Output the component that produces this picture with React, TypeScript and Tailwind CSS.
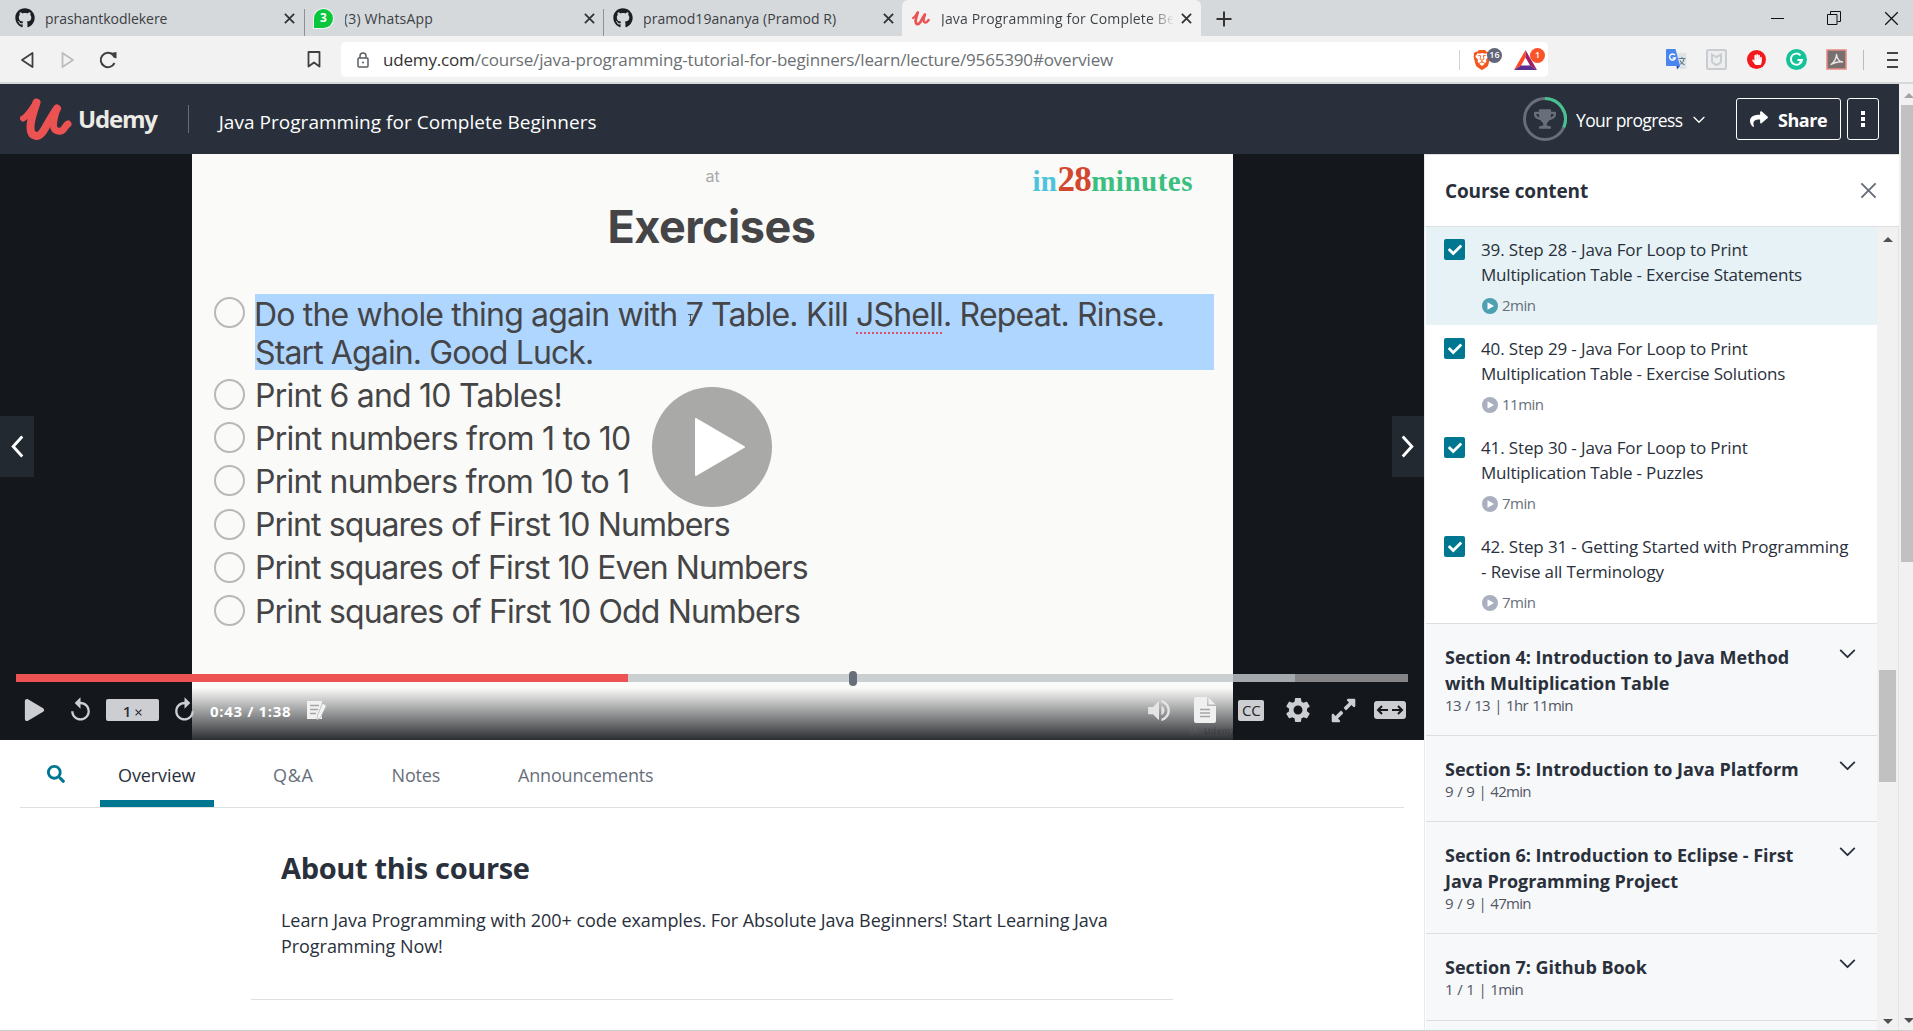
import type { ReactNode } from "react";
import { FaCheck, FaExpandAlt, FaGithub, FaHandPaper, FaPlay, FaSearch, FaShare, FaTrophy } from "react-icons/fa";
import { MdReplay, MdSettings, MdVolumeUp } from "react-icons/md";
import { SiBrave } from "react-icons/si";

/* ---------- shared drawings ---------- */

function UdemyMark({ className }: { className: string }) {
  return (
    <svg viewBox="0 0 52 43" className={className} fill="none" stroke="#ec5252" strokeLinecap="round" strokeLinejoin="round">
      <path d="M3 20.500C8 18 12 10 16.500 4.500" strokeWidth="6" />
      <path d="M16.500 4.500C14 13 10.500 21 10.500 29c0 11 8.500 11.500 13.500 3 4-7 8.500-15 13-21.500" strokeWidth="8" />
      <path d="M37 10.500C35 17 33 23 33.500 28c.500 6 8 7 11 2 1.500-2.500 2-3 3.500-4" strokeWidth="7" />
    </svg>
  );
}

function Chevron({ className }: { className: string }) {
  return (
    <svg viewBox="0 0 18 11" className={className} fill="none" stroke="currentColor" strokeWidth="2" strokeLinecap="round" strokeLinejoin="round">
      <path d="M1.500 1.500 9 9l7.500-7.500" />
    </svg>
  );
}

function Cross({ className }: { className: string }) {
  return (
    <svg viewBox="0 0 12 12" className={className} fill="none" stroke="currentColor">
      <path d="M1 1l10 10M11 1L1 11" />
    </svg>
  );
}

/* ---------- browser chrome ---------- */

function BrowserTab({ icon, label, active }: { icon: ReactNode; label: ReactNode; active?: boolean }) {
  return (
    <div className={"flex h-9 w-[299px] shrink-0 items-center pl-[10px] pr-[9px] " + (active ? "rounded-t-md bg-[#f2f2f2]" : "")}>
      <div className="flex w-[30px] shrink-0 items-center">{icon}</div>
      <div className="min-w-0 flex-1 overflow-hidden whitespace-nowrap pt-px text-[14px] leading-9 text-[#3c4043]">{label}</div>
      <Cross className="ml-2 h-[11px] w-[11px] stroke-2 text-[#333]" />
    </div>
  );
}

function TabStrip() {
  return (
    <div className="flex h-9 bg-[#d5d9dc]">
      <div className="flex pl-[5px]">
        <BrowserTab icon={<FaGithub className="h-5 w-5 text-[#1b1f23]" />} label={<span className="tracking-[-0.05px]">prashantkodlekere</span>} />
        <div className="mt-[9px] w-px bg-[#8e9193]" />
        <BrowserTab
          icon={
            <div className="-ml-px flex h-[19px] w-[19px] items-center justify-center rounded-full rounded-bl-sm bg-[#0ac63c] text-[12px] font-bold text-white ring-1 ring-white/70">3</div>
          }
          label={<span className="-ml-px tracking-[0.18px]">(3) WhatsApp</span>}
        />
        <div className="-ml-px mt-[9px] w-px bg-[#8e9193]" />
        <BrowserTab icon={<FaGithub className="-ml-px h-5 w-5 text-[#1b1f23]" />} label={<span className="-ml-px tracking-[0.06px]">pramod19ananya (Pramod R)</span>} />
        <div className="-ml-[1px]">
          <BrowserTab
            active
            icon={<UdemyMark className="h-[15px] w-[18px]" />}
            label={
              <span className="-ml-px bg-linear-to-r from-[#3c4043] from-[89%] to-[#3c4043]/0 bg-clip-text tracking-[0.16px] text-transparent">
                Java Programming for Complete Be
              </span>
            }
          />
        </div>
      </div>
      <div className="flex w-[46px] items-center justify-center pt-px">
        <svg viewBox="0 0 16 16" className="h-4 w-4 stroke-[#333] stroke-2">
          <path d="M8 0.500v15M0.500 8h15" />
        </svg>
      </div>
      <div className="ml-auto flex items-center pr-[14px] text-[#111]">
        <div className="h-px w-[13px] bg-[#111]" />
        <svg viewBox="0 0 14 14" className="ml-[43px] h-[14px] w-[14px]" fill="none" stroke="currentColor">
          <path d="M.500 3.500h9.500v10H.500zM3.500 3V.500h10v10H10.500" />
        </svg>
        <Cross className="ml-[43px] h-[15px] w-[15px] stroke-1" />
      </div>
    </div>
  );
}

function GoogleTranslate() {
  return (
    <svg viewBox="0 0 21 21" className="h-[21px] w-[21px]">
      <path d="M9 4h10.500a1 1 0 0 1 1 1v14a1 1 0 0 1-1 1H14z" fill="#dfe3e6" />
      <path d="M12.500 9.500h7M16 8v1.500M18.200 9.500c-.6 3-2.500 5-4.700 6M14 11.500c1 2 2.600 3.500 4.600 4.300" stroke="#607d8b" strokeWidth="1.100" fill="none" />
      <path d="M0 1a1 1 0 0 1 1-1h8.500L14 17H1a1 1 0 0 1-1-1z" fill="#4a86f0" />
      <path d="M10.500 17H14l-3 3.500z" fill="#2b4fb8" />
      <path d="M9 6.200A3 3 0 1 0 9.400 9H6.600" stroke="#fff" strokeWidth="1.400" fill="none" />
    </svg>
  );
}

function Toolbar() {
  return (
    <div className="flex h-[46px] items-center bg-[#f2f2f2] pt-px text-[#3f3f3f]">
      <svg viewBox="0 0 14 18" className="ml-[20px] h-[18px] w-[14px]" fill="none" stroke="#3f3f3f" strokeWidth="1.800" strokeLinejoin="round">
        <path d="M12.500 2v14L2 9z" />
      </svg>
      <svg viewBox="0 0 14 18" className="ml-[27px] h-[18px] w-[14px]" fill="none" stroke="#bdbdbd" strokeWidth="1.800" strokeLinejoin="round">
        <path d="M1.500 2v14L12 9z" />
      </svg>
      <svg viewBox="0 0 18 18" className="ml-[24px] h-[18px] w-[18px]" fill="none" stroke="#3f3f3f" strokeWidth="2">
        <path d="M15.500 12A7.200 7.200 0 1 1 14 3.800" />
        <path d="M11.500 2l6-1v6.500l-3-1z" fill="#3f3f3f" stroke="none" />
      </svg>
      <svg viewBox="0 0 14 17" className="ml-[190px] h-[17px] w-[14px]" fill="none" stroke="#3f3f3f" strokeWidth="1.800" strokeLinejoin="round">
        <path d="M1.500 1h11v14.500L7 11.500l-5.500 4z" />
      </svg>
      <div className="ml-[20px] flex h-[35px] w-[1207px] items-center rounded-[5px] bg-white">
        <svg viewBox="0 0 12 16" className="ml-[16px] h-[16px] w-[12px]" fill="none" stroke="#5b5f63" strokeWidth="1.500">
          <rect x="1" y="6" width="10" height="9" rx="1" />
          <path d="M3 6V4a3 3 0 0 1 6 0v2" />
          <circle cx="6" cy="10.500" r="1" fill="#5b5f63" stroke="none" />
        </svg>
        <div className="ml-[14px] whitespace-nowrap text-[17px] leading-[34px] tracking-[-0.17px] text-[#6c7073]">
          <span className="text-[#333]">udemy.com</span>/course/java-programming-tutorial-for-beginners/learn/lecture/9565390#overview
        </div>
        <div className="ml-auto h-5 w-px bg-[#d5d5d5]" />
        <div className="relative ml-[12px] w-[20px]">
          <SiBrave className="h-[22px] w-[20px] text-[#f2571f]" />
          <div className="absolute -top-[1px] left-[15px] flex h-[15px] w-[15px] items-center justify-center rounded-full bg-[#62657a] text-[9px] font-semibold text-white">16</div>
        </div>
        <div className="relative ml-[22px] mr-[11px] w-[23px]">
          <svg viewBox="0 0 23 20" className="h-[20px] w-[23px]">
            <path d="M11.500 0 0 20l7-4.500 4.500-8z" fill="#ff4724" />
            <path d="M11.500 0 23 20l-7-4.500-4.500-8z" fill="#9e1f63" />
            <path d="M0 20h23l-7-4.500H7z" fill="#5c2d91" />
          </svg>
          <div className="absolute -top-[2px] left-[16px] flex h-[15px] w-[15px] items-center justify-center rounded-full bg-[#fb542b] text-[9px] font-semibold text-white">1</div>
        </div>
      </div>
      <div className="ml-auto flex items-center pr-[15px]">
        <GoogleTranslate />
        <svg viewBox="0 0 21 21" className="ml-[19px] h-[21px] w-[21px]" fill="none" stroke="#c9cdd0" strokeWidth="2">
          <rect x="1" y="1" width="19" height="19" rx="1.500" fill="#eceeef" />
          <path d="M6 5.500l4.500 2.500L15 5.500v7c0 1.500-2.500 2.500-4.500 3.500C8.500 15 6 14 6 12.500z" />
        </svg>
        <div className="ml-[20px] flex h-[19px] w-[19px] items-center justify-center rounded-full bg-[#f5191d]">
          <FaHandPaper className="h-[11px] w-[12px] text-white" />
        </div>
        <svg viewBox="0 0 21 21" className="ml-[20px] h-[21px] w-[21px]" fill="none">
          <circle cx="10.500" cy="10.500" r="10.500" fill="#15c39a" />
          <path d="M14.500 6.300A5.600 5.600 0 1 0 16 11h-4.500" stroke="#fff" strokeWidth="1.900" />
          <path d="M13.500 14l2.500-3" stroke="#fff" strokeWidth="1.500" />
        </svg>
        <svg viewBox="0 0 21 21" className="ml-[19px] h-[21px] w-[21px]" fill="none">
          <rect x="1" y="1" width="19" height="19" fill="#77706f" stroke="#e88b82" strokeWidth="1.500" />
          <path d="M5 15.500c3-2 5.500-6.500 5.500-10 .500 4 3 7 6 7.500-4-.800-7 0-11.500 2.500z" stroke="#ece8e7" strokeWidth="1.400" strokeLinejoin="round" />
        </svg>
        <div className="ml-[16px] h-5 w-px bg-[#bcbcbc]" />
        <div className="ml-[23px] flex w-[11px] flex-col gap-[5px]">
          <div className="h-[2px] bg-[#444]" />
          <div className="h-[2px] bg-[#444]" />
          <div className="h-[2px] bg-[#444]" />
        </div>
      </div>
    </div>
  );
}

/* ---------- course header ---------- */

function CourseHeader() {
  return (
    <header className="flex h-[70px] w-full items-center bg-[#29303b] text-white">
      <UdemyMark className="ml-[20px] h-[43px] w-[52px]" />
      <div className="ml-[6px] text-[24px] font-bold leading-none tracking-[-1.2px] text-[#ecebe6]">Udemy</div>
      <div className="ml-[31px] h-7 w-px bg-[#686f7a]" />
      <div className="ml-[30px] whitespace-nowrap pt-[7px] text-[19px] leading-none tracking-[0.03px]">Java Programming for Complete Beginners</div>
      <div className="relative ml-auto h-[44px] w-[44px]">
        <svg viewBox="0 0 44 44" className="h-[44px] w-[44px]" fill="none" strokeWidth="3">
          <circle cx="22" cy="22" r="20.500" stroke="#686f7a" />
          <path d="M22 1.500A20.500 20.500 0 0 1 40.700 30.300" stroke="#46c28e" />
        </svg>
        <FaTrophy className="absolute left-[11px] top-[12px] h-[20px] w-[22px] text-[#686f7a]" />
      </div>
      <div className="ml-[9px] w-[109px] whitespace-nowrap pt-[3px] text-[17.500px] leading-none tracking-[-0.6px]">Your progress</div>
      <Chevron className="ml-[8px] mt-[2px] h-[8px] w-[12px]" />
      <button className="ml-[31px] flex h-[42px] w-[105px] items-center rounded-[3px] border border-white">
        <FaShare className="ml-[12px] h-[18px] w-[20px]" />
        <span className="ml-[9px] pt-[2px] text-[18px] font-bold tracking-[-0.45px]">Share</span>
      </button>
      <button className="ml-[6px] mr-[20px] flex h-[42px] w-[32px] flex-col items-center justify-center gap-[2px] rounded-[3px] border border-white">
        <i className="h-[4px] w-[4px] bg-white" />
        <i className="h-[4px] w-[4px] bg-white" />
        <i className="h-[4px] w-[4px] bg-white" />
      </button>
    </header>
  );
}

/* ---------- video ---------- */

const exercises = [
  { text: "Print 6 and 10 Tables!", tracking: "tracking-[-0.78px]" },
  { text: "Print numbers from 1 to 10", tracking: "tracking-[-0.72px]" },
  { text: "Print numbers from 10 to 1", tracking: "tracking-[-0.76px]" },
  { text: "Print squares of First 10 Numbers", tracking: "tracking-[-0.89px]" },
  { text: "Print squares of First 10 Even Numbers", tracking: "tracking-[-0.91px]" },
  { text: "Print squares of First 10 Odd Numbers", tracking: "tracking-[-0.86px]" },
];

function Bullet() {
  return <div className="h-[31px] w-[31px] shrink-0 rounded-full border-2 border-[#b8b8b8]" />;
}

function Slide() {
  return (
    <div className="h-full w-[1041px] bg-[#fafaf8] font-['Inter',sans-serif] text-[#454547]">
      <div className="grid h-[56px] grid-cols-[1fr_40px_1fr]">
        <div />
        <div className="text-center text-[16px] leading-[45px] text-[#a9a9ab]">at</div>
        <div className="flex items-baseline justify-end whitespace-nowrap pr-[40px] font-['Liberation_Serif',serif] text-[29px] font-bold leading-[52px]">
          <span className="tracking-[0.4px] text-[#4fc3dc]">in</span>
          <span className="text-[35px] leading-[52px] tracking-[-0.6px] text-[#d2472f]">28</span>
          <span className="tracking-[0.5px] text-[#3bbf80]">minutes</span>
        </div>
      </div>
      <h1 className="pr-[2px] pt-px text-center text-[45px] font-bold leading-[32px] tracking-[-0.5px]">Exercises</h1>
      <ul className="mt-[51px] pl-[22px] text-[32px]">
        <li className="flex">
          <div className="pt-[3px]">
            <Bullet />
          </div>
          <div className="relative ml-[10px] h-[76px] w-[959px] whitespace-nowrap bg-[#afd6ff] pt-[2px] leading-[38px] tracking-[-0.82px]">
            <div className="-ml-[1px]">
              Do the whole thing again with 7 Table. Kill{" "}
              <span className="underline decoration-[#d8506e] decoration-dotted decoration-2 underline-offset-[6px]">JShell</span>. Repeat. Rinse.
            </div>
            <div className="tracking-[-0.88px]">Start Again. Good Luck.</div>
            <svg viewBox="0 0 6 9" className="absolute left-[433px] top-[19px] h-[9px] w-[5px] stroke-[#333]" fill="none">
              <path d="M0 1h6M3 1v7.500M1.500 8.500h3" />
            </svg>
          </div>
        </li>
        <li className="h-[3px]" />
        {exercises.map((e) => (
          <li key={e.text} className="flex h-[43.200px] items-center">
            <Bullet />
            <span className={"ml-[10px] whitespace-nowrap pt-[2px] " + e.tracking}>{e.text}</span>
          </li>
        ))}
      </ul>
    </div>
  );
}

function Controls() {
  return (
    <div className="absolute inset-x-0 bottom-0 flex h-[66px] flex-col">
      <div className="relative mx-4 flex h-2">
        <div className="w-[612px] bg-[#ec5252]" />
        <div className="w-[667px] bg-[#c1c6ca]/83" />
        <div className="flex-1 bg-[#b5b5b5]/70" />
        <div className="absolute -top-[3px] left-[833px] h-[15px] w-[8px] rounded-[4px] bg-[#686f7a]" />
      </div>
      <div className="flex h-[56px] items-center text-[#cdced1]">
        <div className="flex w-[46px] translate-x-[11px] justify-center">
          <FaPlay className="h-[22px] w-[21px]" />
        </div>
        <div className="ml-[11px] flex w-[46px] justify-center">
          <MdReplay className="h-[28px] w-[29px]" />
        </div>
        <div className="ml-[3px] flex h-[22px] w-[53px] items-center justify-center gap-[4px] rounded-[2px] bg-[#cdced1] text-[#29303b]">
          <span className="pt-[3px] text-[15px] font-semibold leading-none">1</span>
          <Cross className="mt-[5px] h-[7px] w-[7px] stroke-2" />
        </div>
        <div className="flex w-[51px] justify-center">
          <MdReplay className="h-[28px] w-[29px] -scale-x-100" />
        </div>
        <div className="w-[97px] whitespace-nowrap pt-[2px] text-[15px] font-bold tracking-[0.65px] text-white">0:43 / 1:38</div>
        <svg viewBox="0 0 20 20" className="h-5 w-5">
          <path d="M0 1h15v18H0z" fill="#f1f1f1" />
          <path d="M3 5.500h9M3 9.500h8M3 13.500h6" stroke="#a5a5a5" strokeWidth="1.500" />
          <path d="M15.500 3l4 2.500-6 12-3.500 2.500.500-4.500z" fill="#f4f4f4" stroke="#b4b4b4" strokeWidth=".800" />
        </svg>
        <div className="ml-auto flex items-center pr-[11px]">
          <div className="flex w-[46.200px] justify-center">
            <MdVolumeUp className="h-[29px] w-[30px] text-[#e4e4e5]" />
          </div>
          <div className="flex w-[46.200px] justify-center">
            <svg viewBox="0 0 22 26" className="h-[26px] w-[22px]">
              <path d="M2 0h11v9h9v15a2 2 0 0 1-2 2H2a2 2 0 0 1-2-2V2a2 2 0 0 1 2-2z" fill="#f0f0f1" />
              <path d="M14.500.500 21.500 7.500h-7z" fill="#f0f0f1" />
              <path d="M6 12.500h10M6 16h10M6 19.500h10" stroke="#a3a4a6" strokeWidth="1.400" />
            </svg>
          </div>
          <div className="flex w-[46.200px] justify-center">
            <div className="flex h-[21px] w-[26px] items-center justify-center rounded-[2px] bg-[#cdced1] text-[15px] leading-none text-[#22262b]">CC</div>
          </div>
          <div className="flex w-[46.200px] justify-center">
            <MdSettings className="h-[30px] w-[30px]" />
          </div>
          <div className="flex w-[46.200px] justify-center">
            <FaExpandAlt className="h-[27px] w-[27px]" />
          </div>
          <div className="flex w-[46.200px] justify-center">
            <svg viewBox="0 0 32 18" className="h-[18px] w-[32px]" fill="none">
              <rect width="32" height="18" rx="3" fill="#cdced1" />
              <path d="M14 9H4.500M8 5 4 9l4 4M18 9h9.500M24 5l4 4-4 4" stroke="#14171c" strokeWidth="2" />
            </svg>
          </div>
        </div>
      </div>
    </div>
  );
}

function Video() {
  return (
    <div className="relative flex h-[586px] bg-[#14171c] pl-[192px]">
      <Slide />
      <div className="absolute inset-x-0 bottom-0 h-[52px] bg-linear-to-b from-[#14171c]/0 to-[#14171c]/90" />
      <div className="absolute left-[652px] top-[233px] flex h-[120px] w-[120px] items-center justify-center rounded-full bg-[#a9a9a8]">
        <svg viewBox="0 0 50 58" className="ml-[16px] h-[58px] w-[50px] fill-white stroke-white stroke-2" strokeLinejoin="round">
          <path d="M1 1v56l48-28z" />
        </svg>
      </div>
      <div className="absolute left-0 top-[262px] flex h-[61px] w-[34px] items-center justify-center bg-[#222930]">
        <svg viewBox="0 0 14 24" className="h-[23px] w-[14px]" fill="none" stroke="#fff" strokeWidth="3">
          <path d="M12.500 1.500 3 12l9.500 10.500" />
        </svg>
      </div>
      <div className="absolute right-0 top-[262px] flex h-[61px] w-[32px] items-center justify-center bg-[#222930]">
        <svg viewBox="0 0 14 24" className="h-[23px] w-[14px]" fill="none" stroke="#fff" strokeWidth="3">
          <path d="M1.500 1.500 11 12l-9.500 10.500" />
        </svg>
      </div>
      <div className="absolute bottom-[5px] left-[1188px] flex items-center gap-1 opacity-15 grayscale">
        <UdemyMark className="h-[10px] w-[12px]" />
        <span className="text-[9px] font-bold leading-none text-black">Udemy</span>
      </div>
      <Controls />
    </div>
  );
}

/* ---------- below the video ---------- */

function CourseTabs() {
  return (
    <nav className="mx-5 flex h-[68px] border-b border-[#dedfe0] text-[18px] text-[#686f7a]">
      <div className="flex w-[80px] justify-center pt-[25px]">
        <FaSearch className="-ml-[9px] h-[18px] w-[18px] text-[#007791]" />
      </div>
      <div className="flex gap-[40px]">
        <div className="h-[67px] w-[114px] whitespace-nowrap border-b-[7px] border-[#007791] pl-[18px] pt-[9px] leading-[52px] tracking-[-0.1px] text-[#29303b]">Overview</div>
        <div className="pl-[19px] pr-[19px] pt-[9px] leading-[52px] tracking-[0.7px]">Q&amp;A</div>
        <div className="pl-[19px] pr-[20px] pt-[9px] leading-[52px] tracking-[-0.2px]">Notes</div>
        <div className="pl-[18px] pt-[9px] leading-[52px] tracking-[-0.2px]">Announcements</div>
      </div>
    </nav>
  );
}

function About() {
  return (
    <section className="ml-[251px] w-[922px] border-b border-[#dedfe0] pb-[40px] pl-[30px] pt-[42px] text-[#29303b]">
      <h2 className="text-[29px] font-bold leading-[35px] tracking-[-0.35px]">About this course</h2>
      <p className="mt-[22px] w-[860px] text-[18px] leading-[26px] tracking-[-0.05px]">
        Learn Java Programming with 200+ code examples. For Absolute Java Beginners! Start Learning Java Programming Now!
      </p>
    </section>
  );
}

/* ---------- sidebar ---------- */

const lectures = [
  { lines: ["39. Step 28 - Java For Loop to Print", "Multiplication Table - Exercise Statements"], time: "2min", current: true },
  { lines: ["40. Step 29 - Java For Loop to Print", "Multiplication Table - Exercise Solutions"], time: "11min" },
  { lines: ["41. Step 30 - Java For Loop to Print", "Multiplication Table - Puzzles"], time: "7min" },
  { lines: ["42. Step 31 - Getting Started with Programming", "- Revise all Terminology"], time: "7min" },
];

const sections = [
  { lines: ["Section 4: Introduction to Java Method", "with Multiplication Table"], meta: "13 / 13 | 1hr 11min" },
  { lines: ["Section 5: Introduction to Java Platform"], meta: "9 / 9 | 42min" },
  { lines: ["Section 6: Introduction to Eclipse - First", "Java Programming Project"], meta: "9 / 9 | 47min" },
  { lines: ["Section 7: Github Book"], meta: "1 / 1 | 1min" },
];

function Sidebar() {
  return (
    <aside className="flex w-[475px] flex-col border-l border-[#e8e9eb] bg-white">
      <div className="flex h-[73px] shrink-0 items-center justify-between border-y border-[#dedfe0] pl-[20px] pr-[22px]">
        <h2 className="pt-[2px] text-[19px] font-bold tracking-[-0.13px] text-[#29303b]">Course content</h2>
        <Cross className="h-[17px] w-[17px] stroke-[1.4] text-[#686f7a]" />
      </div>
      <div className="flex min-h-0 flex-1 pl-px">
        <div className="flex w-[451px] flex-col overflow-hidden">
          {lectures.map((l) => (
            <div key={l.lines[0]} className={"flex shrink-0 pl-[18px] " + (l.current ? "h-[98px] bg-[#e6f2f5]" : "h-[99px] pt-px")}>
              <div className="mt-[12px] flex h-[21px] w-[21px] items-center justify-center rounded-[2px] bg-[#007791]">
                <FaCheck className="h-[14px] w-[14px] text-white" />
              </div>
              <div className="ml-[16px] whitespace-nowrap pt-[10px] text-[17px] leading-[25px] tracking-[-0.13px] text-[#29303b]">
                {l.lines.map((line) => (
                  <div key={line} className={line.startsWith("Mult") ? "tracking-[-0.2px]" : ""}>
                    {line}
                  </div>
                ))}
                <div className="mt-[6px] flex items-center gap-[4px] pl-px text-[15px] tracking-[-0.5px] text-[#686f7a]">
                  <svg viewBox="0 0 16 16" className={"h-[16px] w-[16px] " + (l.current ? "text-[#4d9fb2]" : "text-[#a9afbe]")}>
                    <circle cx="8" cy="8" r="8" fill="currentColor" />
                    <path d="M5.500 4.200v7.600L12 8z" fill="#fff" />
                  </svg>
                  {l.time}
                </div>
              </div>
            </div>
          ))}
          <div className="h-px shrink-0" />
          {sections.map((s) => (
            <div key={s.lines[0]} className="flex shrink-0 justify-between border-t border-[#dcdfe2] bg-[#f7f8fa] pb-[21px] pl-[19px] pr-[21px] pt-[20px] text-[#29303b]">
              <div className="whitespace-nowrap">
                {s.lines.map((line) => (
                  <div key={line} className="text-[18px] font-bold leading-[26px] tracking-[-0.03px]">
                    {line}
                  </div>
                ))}
                <div className="text-[15px] leading-[18px] tracking-[-0.7px] text-[#505763] [word-spacing:1.100px]">{s.meta}</div>
              </div>
              <Chevron className="mt-[5px] h-[10px] w-[17px]" />
            </div>
          ))}
          <div className="h-px shrink-0 bg-[#f7f8fa]" />
          <div className="min-h-0 flex-1 border-t border-[#dcdfe2] bg-[#f7f8fa]" />
        </div>
        <div className="flex w-[22px] flex-col items-center border-r border-[#e4e4e4] bg-[#f1f1f1] pb-[6px] pt-[10px]">
          <div className="h-0 w-0 border-x-[5px] border-b-[5px] border-x-transparent border-b-[#505050]" />
          <div className="mt-[428px] h-[112px] w-[17px] bg-[#c1c1c1]" />
          <div className="mt-auto h-0 w-0 border-x-[5px] border-t-[5px] border-x-transparent border-t-[#505050]" />
        </div>
      </div>
    </aside>
  );
}

export default function App() {
  return (
    <div className="flex h-[1031px] w-[1913px] flex-col overflow-hidden border-b border-[#cfcfcf] bg-white font-['Open_Sans','Noto_Sans',sans-serif]">
      <TabStrip />
      <Toolbar />
      <div className="h-[2px] shrink-0 bg-[#d5d9dc]" />
      <div className="flex min-h-0 flex-1">
        <div className="flex w-[1899px] flex-col">
          <CourseHeader />
          <div className="flex min-h-0 flex-1">
            <main className="w-[1424px]">
              <Video />
              <CourseTabs />
              <About />
            </main>
            <Sidebar />
          </div>
        </div>
        <div className="flex w-[14px] flex-col items-end overflow-hidden bg-[#f1f1f1] pb-[7px] pt-[9px]">
          <div className="-mr-[1px] h-0 w-0 border-x-[5px] border-b-[5px] border-x-transparent border-b-[#a3a3a3]" />
          <div className="mt-[7px] h-[457px] w-[12px] bg-[#c1c1c1]" />
          <div className="-mr-[1px] mt-auto h-0 w-0 border-x-[5px] border-t-[5px] border-x-transparent border-t-[#505050]" />
        </div>
      </div>
    </div>
  );
}
